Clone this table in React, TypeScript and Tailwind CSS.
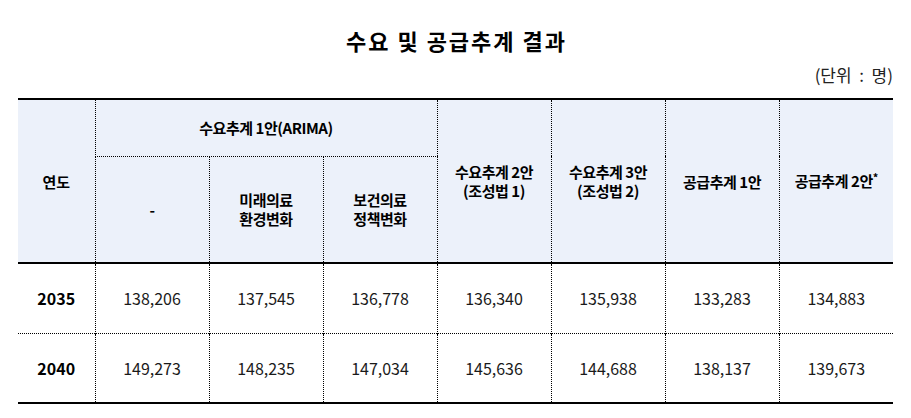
const font = { fontFamily: '"Noto Sans CJK KR", "Noto Sans", sans-serif' };

const rows = [
  { year: "2035", values: ["138,206", "137,545", "136,778", "136,340", "135,938", "133,283", "134,883"] },
  { year: "2040", values: ["149,273", "148,235", "147,034", "145,636", "144,688", "138,137", "139,673"] },
];

export default function App() {
  const th =
    "border-l border-dotted border-black text-center align-middle font-bold text-[15px] leading-[19px] tracking-[-0.03em] text-black";

  return (
    <div className="w-[911px] h-[418px] bg-white px-[18px] text-black" style={font}>
      <h1 className="pt-[26px] pl-[2px] text-center text-[22px] leading-[28px] font-bold tracking-[2px]">
        수요 및 공급추계 결과
      </h1>
      <p className="mt-[11px] text-right text-[17px] leading-[20px] text-[#222] whitespace-pre">
        (단위  :  명)
      </p>

      <table className="mt-[13px] w-[875px] table-fixed border-collapse border-b-2 border-black">
        <colgroup>
          <col className="w-[77px]" />
          <col className="w-[114px]" />
          <col className="w-[114px]" />
          <col className="w-[114px]" />
          <col className="w-[114px]" />
          <col className="w-[114px]" />
          <col className="w-[114px]" />
          <col className="w-[114px]" />
        </colgroup>
        <thead className="bg-[#ecf1fa]">
          <tr className="h-[57px] border-t-2 border-black">
            <th
              rowSpan={2}
              className="text-center align-middle font-bold text-[15px] leading-[19px] text-black"
            >
              연도
            </th>
            <th colSpan={3} className={`${th} border-b`}>
              수요추계 1안(ARIMA)
            </th>
            <th rowSpan={2} className={th}>
              수요추계 2안
              <br />
              (조성법 1)
            </th>
            <th rowSpan={2} className={th}>
              수요추계 3안
              <br />
              (조성법 2)
            </th>
            <th rowSpan={2} className={th}>
              공급추계 1안
            </th>
            <th rowSpan={2} className={th}>
              공급추계 2안<span className="text-[11px] relative top-[-5px]">*</span>
            </th>
          </tr>
          <tr className="h-[107px]">
            <th className={th}>-</th>
            <th className={th}>
              미래의료
              <br />
              환경변화
            </th>
            <th className={th}>
              보건의료
              <br />
              정책변화
            </th>
          </tr>
        </thead>
        <tbody>
          {rows.map((r, i) => (
            <tr
              key={r.year}
              className={`h-[70px] ${i === 0 ? "border-t-2 border-black" : "border-t border-dotted border-black"}`}
            >
              <td className="text-center align-middle text-[16px] font-bold">{r.year}</td>
              {r.values.map((v, j) => (
                <td
                  key={j}
                  className="border-l border-dotted border-black text-center align-middle text-[16px] text-[#1a1a1a]"
                >
                  {v}
                </td>
              ))}
            </tr>
          ))}
        </tbody>
      </table>
    </div>
  );
}
